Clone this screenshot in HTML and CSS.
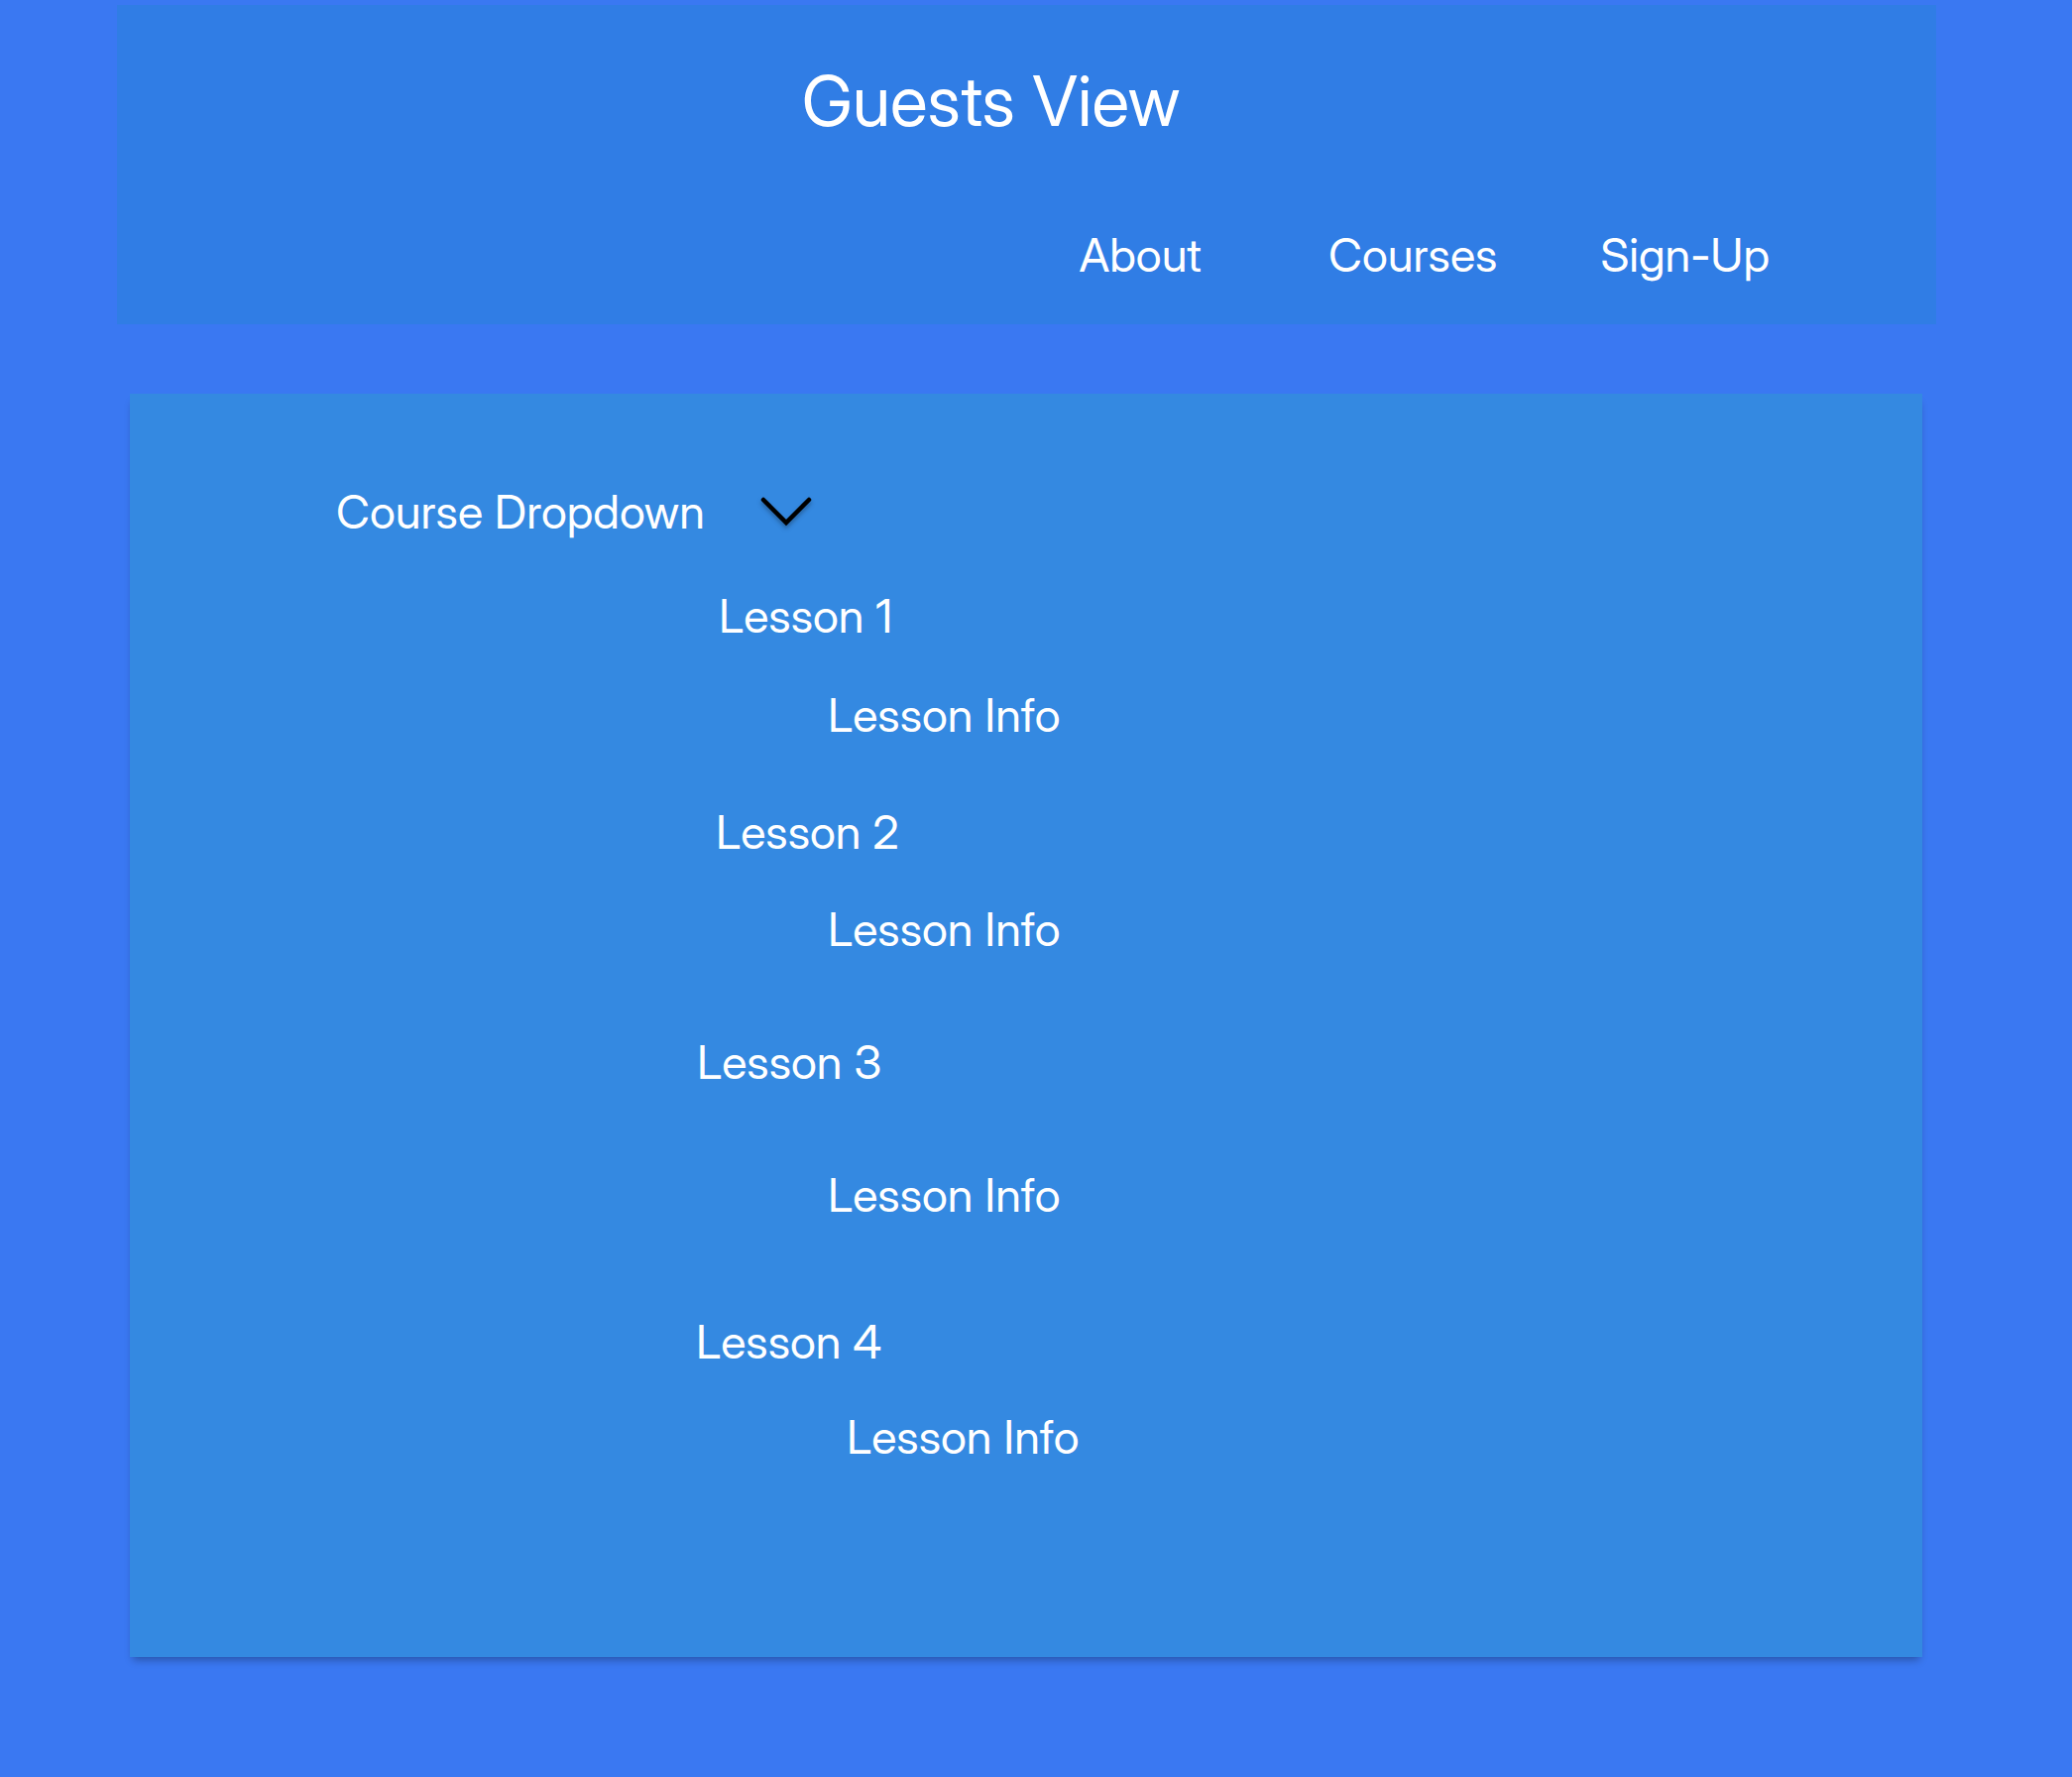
FILE: index.html
```html
<!DOCTYPE html>
<html lang="en">
<head>
<meta charset="utf-8">
<meta name="viewport" content="width=device-width, initial-scale=1">
<title>Guests View</title>
<link rel="stylesheet" href="styles.css">
</head>
<body>
<header class="header">
  <h1 class="title">Guests View</h1>
  <nav class="nav">
    <a class="nav-about" href="#about">About</a>
    <a class="nav-courses" href="#courses">Courses</a>
    <a href="#sign-up">Sign-Up</a>
  </nav>
</header>
<main class="panel">
  <button class="dropdown" type="button" aria-expanded="true" aria-controls="lessons">
    Course Dropdown
    <svg class="chevron" viewBox="0 0 60 44" width="60" height="44" aria-hidden="true">
      <path d="M7 10 L30 33 L53 10" fill="none" stroke="#000" stroke-width="4.5" stroke-linecap="round"/>
    </svg>
  </button>
  <div class="lessons" id="lessons">
    <section class="lesson lesson-first">
      <h2>Lesson 1</h2>
      <p>Lesson Info</p>
    </section>
    <section class="lesson lesson-second">
      <h2>Lesson 2</h2>
      <p>Lesson Info</p>
    </section>
    <section class="lesson lesson-third">
      <h2>Lesson 3</h2>
      <p>Lesson Info</p>
    </section>
    <section class="lesson lesson-fourth">
      <h2>Lesson 4</h2>
      <p>Lesson Info</p>
    </section>
  </div>
</main>
</body>
</html>
```
FILE: styles.css
```css
* {
  box-sizing: border-box;
}

body {
  margin: 0;
  padding: 5px 137px 110px 118px;
  background: #3a78f2;
  color: #fff;
  font-family: "Inter Display", Inter, "Liberation Sans", sans-serif;
  font-size: 47px;
  line-height: 60px;
}

h1,
h2,
p {
  margin: 0;
  font-weight: 400;
}

h2,
p {
  font-size: 47px;
}

.header {
  padding: 53px 168px 40px;
  background: #307de5;
}

.title {
  padding-right: 72px;
  font-size: 70px;
  line-height: 88px;
  text-align: center;
}

.nav {
  display: flex;
  justify-content: flex-end;
  margin-top: 81px;
}

.nav a {
  color: inherit;
  text-decoration: none;
}

.nav-about {
  margin-right: 128px;
}

.nav-courses {
  margin-right: 104px;
}

.panel {
  margin: 70px 14px 0 13px;
  padding: 89px 0 192px 208px;
  background: #3489e1;
  box-shadow: 0 6px 8px -3px rgba(0, 0, 0, 0.3);
}

.dropdown {
  display: flex;
  align-items: center;
  gap: 52px;
  padding: 0;
  border: 0;
  background: none;
  color: inherit;
  font: inherit;
}

.chevron {
  filter: drop-shadow(0 3px 2px rgba(0, 0, 0, 0.3));
}

.lessons {
  margin-top: 45px;
}

.lesson {
  display: grid;
  gap: 40px;
  margin-bottom: 58px;
  padding-left: 386px;
}

.lesson p {
  padding-left: 110px;
}

.lesson-second {
  gap: 38px;
  margin-bottom: 74px;
  padding-left: 383px;
}

.lesson-second p {
  padding-left: 113px;
}

.lesson-third {
  gap: 74px;
  margin-bottom: 88px;
  padding-left: 364px;
}

.lesson-third p {
  padding-left: 132px;
}

.lesson-fourth {
  gap: 36px;
  margin-bottom: 0;
  padding-left: 363px;
}

.lesson-fourth p {
  padding-left: 152px;
}
```
